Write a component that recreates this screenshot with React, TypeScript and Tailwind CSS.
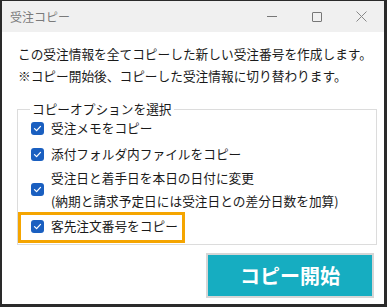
import React from 'react';

const CheckBox: React.FC = () => (
  <span className="flex h-[13px] w-[13px] shrink-0 items-center justify-center rounded-[3px] bg-[#1a5fc0]">
    <svg width="9" height="9" viewBox="0 0 9 9" fill="none">
      <path d="M1.5 4.6 L3.6 6.6 L7.5 2.4" stroke="#fff" strokeWidth="1.3" strokeLinecap="round" strokeLinejoin="round" />
    </svg>
  </span>
);

const App: React.FC = () => {
  return (
    <div
      className="h-[307px] w-[387px] bg-[#2a2a2a] pb-[3px] pl-[2px] pr-[3px] pt-[1px]"
      style={{ fontFamily: '"Noto Sans CJK JP", "Noto Sans", sans-serif' }}
    >
      <div className="flex h-full flex-col bg-white">
        {/* title bar */}
        <div className="flex h-[31px] items-center bg-[#f0f0f0]">
          <span className="pl-[8px] text-[12px] text-[#7a7a7a]">受注コピー</span>
          <div className="ml-auto flex h-full">
            <div className="flex w-[45px] items-center justify-center">
              <span className="h-[1px] w-[10px] bg-[#777]" />
            </div>
            <div className="flex w-[45px] items-center justify-center">
              <span className="h-[10px] w-[10px] rounded-[1px] border border-[#777]" />
            </div>
            <div className="flex w-[45px] items-center justify-center">
              <svg width="11" height="11" viewBox="0 0 11 11">
                <path d="M0.5 0.5 L10.5 10.5 M10.5 0.5 L0.5 10.5" stroke="#888" strokeWidth="1" />
              </svg>
            </div>
          </div>
        </div>

        {/* body */}
        <div className="flex flex-1 flex-col pl-[15px] pr-[7px] pt-[11px] text-[12.7px] leading-[22px] text-[#1a1a1a]">
          <p className="whitespace-nowrap pl-[1px]">この受注情報を全てコピーした新しい受注番号を作成します。</p>
          <p className="whitespace-nowrap pl-[1px]">※コピー開始後、コピーした受注情報に切り替わります。</p>

          <fieldset className="mt-[14px] border border-[#dcdcdc] pb-[1px] pl-[10px] pr-[8px]">
            <legend className="ml-[2px] px-[2px] leading-[16px]">コピーオプションを選択</legend>
            <div className="flex flex-col">
              <div className="flex h-[22px] items-center gap-[7px] pl-[3px]">
                <CheckBox />
                <span>受注メモをコピー</span>
              </div>
              <div className="mt-[4px] flex h-[22px] items-center gap-[7px] pl-[3px]">
                <CheckBox />
                <span>添付フォルダ内ファイルをコピー</span>
              </div>
              <div className="mt-[1px] flex items-center gap-[7px] pl-[3px]">
                <CheckBox />
                <div className="whitespace-nowrap leading-[23px]">
                  <div>受注日と着手日を本日の日付に変更</div>
                  <div>(納期と請求予定日には受注日との差分日数を加算)</div>
                </div>
              </div>
              <div className="-ml-[10px] flex w-[167px] items-center gap-[7px] border-[3px] border-[#f5a500] pb-[3px] pl-[10px] pt-0">
                <CheckBox />
                <span>客先注文番号をコピー</span>
              </div>
            </div>
          </fieldset>

          <div className="mt-[8px] flex justify-end pr-[3px]">
            <button className="flex h-[45px] w-[168px] items-center justify-center border-2 border-[#d6d6d6] bg-[#16adc1] text-[20px] font-bold text-white">
              コピー開始
            </button>
          </div>
        </div>
      </div>
    </div>
  );
};

export default App;
